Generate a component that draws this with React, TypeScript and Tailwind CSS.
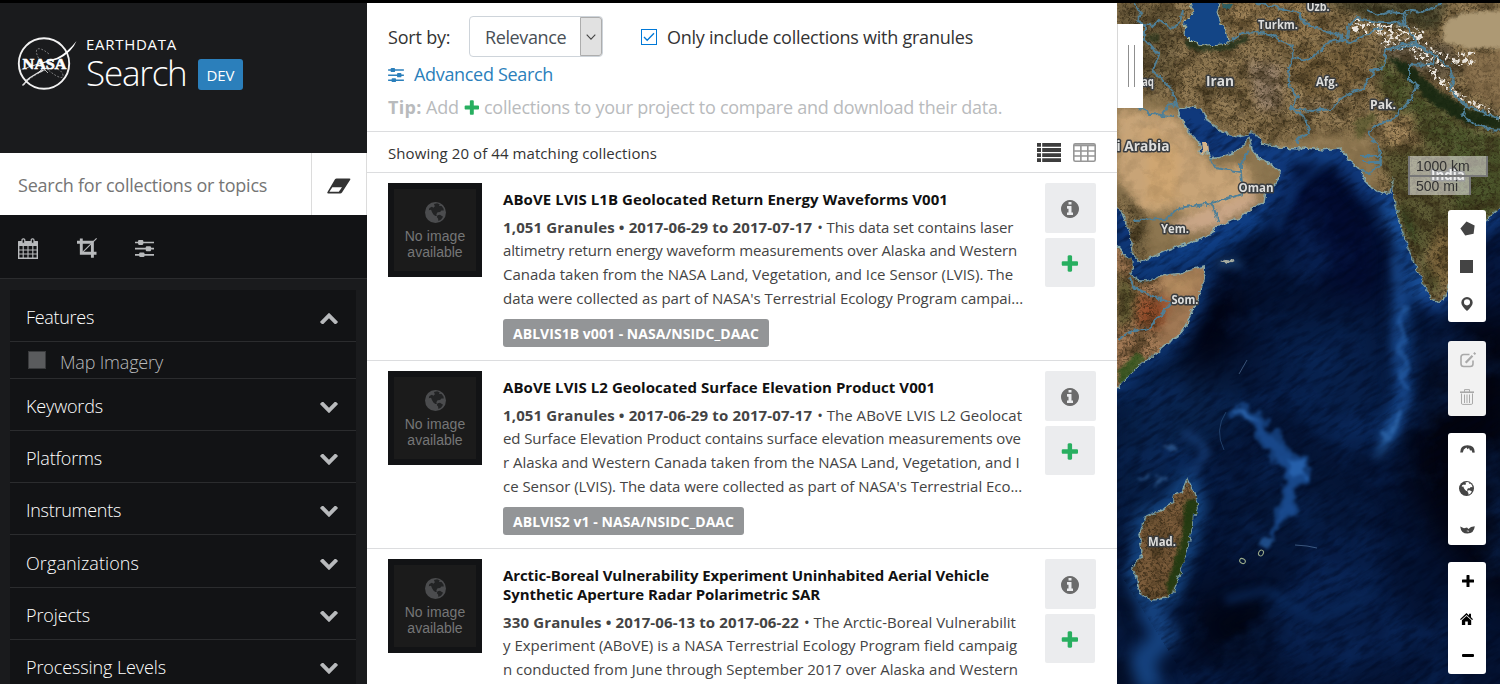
import type { ReactNode } from "react";

/* ---------- icons ---------- */

function Plus({ className }: { className: string }) {
  return (
    <svg viewBox="128 256 1472 1472" className={className} fill="currentColor">
      <path d="M1600 896v192q0 40-28 68t-68 28h-416v416q0 40-28 68t-68 28h-192q-40 0-68-28t-28-68v-416h-416q-40 0-68-28t-28-68v-192q0-40 28-68t68-28h416v-416q0-40 28-68t68-28h192q40 0 68 28t28 68v416h416q40 0 68 28t28 68z" />
    </svg>
  );
}

function Info({ className }: { className: string }) {
  return (
    <svg viewBox="128 128 1536 1536" className={className} fill="currentColor">
      <path d="M1152 1376v-160q0-14-9-23t-23-9h-96v-512q0-14-9-23t-23-9h-320q-14 0-23 9t-9 23v160q0 14 9 23t23 9h96v320h-96q-14 0-23 9t-9 23v160q0 14 9 23t23 9h448q14 0 23-9t9-23zm-128-896v-160q0-14-9-23t-23-9h-192q-14 0-23 9t-9 23v160q0 14 9 23t23 9h192q14 0 23-9t9-23zm640 416q0 209-103 385.5t-279.5 279.5-385.5 103-385.5-103-279.5-279.5-103-385.5 103-385.5 279.5-279.5 385.5-103 385.5 103 279.5 279.5 103 385.5z" />
    </svg>
  );
}

function Chevron({ up = false }: { up?: boolean }) {
  return (
    <svg viewBox="90 570 1612 1000" className={up ? "mt-px h-[11px] w-[18px] rotate-180" : "mt-[2px] h-[11px] w-[18px]"} fill="#b8babc">
      <path d="M1683 808l-742 741q-19 19-45 19t-45-19l-742-741q-19-19-19-45.500t19-45.500l166-165q19-19 45-19t45 19l531 531 531-531q19-19 45-19t45 19l166 165q19 19 19 45.500t-19 45.500z" />
    </svg>
  );
}

function Sliders({ className }: { className: string }) {
  return (
    <svg viewBox="0 0 18 16" className={className} fill="currentColor">
      <path d="M0 1.500h18v1.600H0zM0 7.400h18v1.600H0zM0 13.200h18v1.600H0z" />
      <rect x="2.900" y="0" width="5" height="4.600" rx="1" />
      <rect x="10.200" y="5.800" width="5" height="4.800" rx="1" />
      <rect x="4" y="11.700" width="5" height="4.300" rx="1" />
    </svg>
  );
}

function Calendar() {
  return (
    <svg viewBox="0 0 20 21" className="h-[21px] w-5" fill="none" stroke="#b8babc">
      <path d="M0.700 4h18.600v16.200H0.700z" strokeWidth="1.400" />
      <path d="M0.700 3.500h18.600v4H0.700z" fill="#b8babc" strokeWidth="1" />
      <path d="M5.200 7v13M10 7v13M14.800 7v13M1 12h18M1 16h18" strokeWidth="1.100" />
      <rect x="4" y="0.800" width="2.800" height="4.600" rx="1.200" fill="#121315" strokeWidth="1.200" />
      <rect x="13.200" y="0.800" width="2.800" height="4.600" rx="1.200" fill="#121315" strokeWidth="1.200" />
    </svg>
  );
}

function Crop() {
  return (
    <svg viewBox="0 0 20 20" className="size-5" fill="none" stroke="#b8babc">
      <path d="M4.300 0.500v14.700h15.200M0 4.300h15.400v15.400" strokeWidth="2.900" />
      <path d="M5 14.800L19.600 0.400" strokeWidth="1.100" />
    </svg>
  );
}

function Eraser() {
  return (
    <svg viewBox="0 0 24 16" className="h-4 w-6" fill="#333">
      <path d="M9.600 0.400h12.900q1.300 0 0.700 1.300L15 14.400q-0.700 1.100-1.800 1.100H1.300Q-0.300 15.400 0.500 14L8 1.300Q8.600 0.400 9.600 0.400z" />
      <path d="M5.300 9.200h9.700l-3.200 4.600H2.400z" fill="#fff" />
    </svg>
  );
}

function Globe({ className, land, sea }: { className: string; land: string; sea: string }) {
  return (
    <svg viewBox="0 0 20 20" className={className}>
      <circle cx="10" cy="10" r="10" fill={land} />
      <path
        fill={sea}
        d="M8.500 2L11.500 1.300 14 2.200 13.200 3.600 15.800 3.800 17.600 6.200 17.900 8.200 15.600 8 14.400 9.600 12 9.800 10.800 11.600 11.400 13 9.800 13.400 8 11.800 6.600 9.500 5.800 7.400 3.600 7.800 4.200 5.800 6.600 4.600 8 5.400 9.400 4Z"
      />
      <path fill={sea} d="M12 12.600L14.200 12.200 17.200 14 15.400 16.600 12.800 18.200 12.400 15.600 11.200 14.200Z" />
    </svg>
  );
}

function NasaLogo() {
  return (
    <svg viewBox="0 0 60 54" className="h-[54px] w-[60px]" fill="none" stroke="#f2f2f2">
      <circle cx="27" cy="26.500" r="25.200" strokeWidth="1.900" />
      <path d="M7 48C16 36 42 24 46 38c1 7-14-2-22-13-9-13-4-18 8-8" strokeWidth="0.600" strokeDasharray="2 1.500" opacity="0.750" />
      <path d="M5.500 48.500l7-7.500 8-5 6-3" strokeWidth="1.400" opacity="0.900" />
      <path d="M21 36l5-5 5 5M9 43l4-2" strokeWidth="1" opacity="0.700" />
      <text x="27.500" y="31.500" textAnchor="middle" textLength="44" lengthAdjust="spacingAndGlyphs" fontFamily="Liberation Serif, serif" fontWeight="700" fontSize="14.500" fill="#fff" stroke="#fff" strokeWidth="0.600">
        NASA
      </text>
      <path d="M0.500 34.500L12 29.500 40 20.800Q51 15 59.500 4Q55 15.500 41 22.300L14 29.500z" fill="#fff" stroke="none" />
    </svg>
  );
}

/* ---------- sidebar ---------- */

const facets: { label: string; cls: string; h: string }[] = [
  { label: "Keywords", cls: "tracking-[-0.16px]", h: "h-[52px]" },
  { label: "Platforms", cls: "tracking-[-0.16px]", h: "h-[52px]" },
  { label: "Instruments", cls: "tracking-[-0.27px]", h: "h-[52px]" },
  { label: "Organizations", cls: "tracking-[0.09px]", h: "h-[53px]" },
  { label: "Projects", cls: "tracking-[-0.13px]", h: "h-[52px]" },
  { label: "Processing Levels", cls: "tracking-[-0.1px]", h: "h-[52px]" },
];

function Sidebar() {
  return (
    <aside className="flex w-[367px] shrink-0 flex-col bg-[#1a1b1d]">
      <header className="flex h-[150px] shrink-0 items-start pt-[34px] pl-[17px]">
        <NasaLogo />
        <div className="ml-[9px] flex flex-col text-white">
          <span className="-mt-px h-[17px] text-[15px] leading-[17px] tracking-[0.72px]">EARTHDATA</span>
          <div className="mt-[5px] flex items-center">
            <span className="-mt-0.5 w-[112px] text-[35px] leading-[32px] font-light tracking-[-1.2px]">Search</span>
            <span className="mt-px flex h-[31px] w-[45px] items-center justify-center rounded-[3px] bg-[#2b7fbb] pt-0.5 text-[15px] tracking-[-0.06px]">DEV</span>
          </div>
        </div>
      </header>
      <div className="flex h-[62px] shrink-0 border-r border-[#dcdcdc] bg-white">
        <div className="flex w-[311px] items-center pt-[3px] pl-[18px] text-[18px] tracking-[-0.24px] text-[#757575]">Search for collections or topics</div>
        <div className="flex flex-1 items-center justify-center border-l border-[#dcdcdc] pt-[3px]">
          <Eraser />
        </div>
      </div>
      <div className="flex h-[64px] shrink-0 items-center border-b border-[#2b2c2e] bg-[#121315] pb-[5px] pl-[18px] text-[#b8babc]">
        <div className="flex items-center pt-[8px]">
          <Calendar />
          <div className="w-[39px]" />
          <Crop />
          <div className="w-[38px]" />
          <Sliders className="mt-px h-[17px] w-[19px]" />
        </div>
      </div>
      <div className="min-h-0 flex-1 overflow-hidden pt-[11px] pr-[11px] pl-2.5 text-[18px] font-light">
        <div className="bg-[#121315]">
          <div className="flex h-[52px] items-center justify-between border-b border-[#2b2c2e] pt-1 pr-[18px] pl-4 tracking-[-0.3px] text-white">
            Features
            <Chevron up />
          </div>
          <div className="flex h-[37px] items-center border-b border-[#2b2c2e] pl-[18px] tracking-[-0.18px] text-[#b8babc]">
            <span className="size-[18px] border border-[#3a3b3d] bg-[#5a5b5d]" />
            <span className="ml-[14px] pt-[4px]">Map Imagery</span>
          </div>
          {facets.map((f) => (
            <div key={f.label} className={`flex items-center justify-between border-b border-[#2b2c2e] pt-1 pr-[18px] pl-4 text-white ${f.h} ${f.cls}`}>
              {f.label}
              <Chevron />
            </div>
          ))}
        </div>
      </div>
    </aside>
  );
}

/* ---------- results ---------- */

type Line = [string, string];
type Result = { titles: Line[]; bold: Line; first: Line; lines: Line[]; tag?: Line };

const results: Result[] = [
  {
    titles: [["ABoVE LVIS L1B Geolocated Return Energy Waveforms V001", "tracking-[0.065px]"]],
    bold: ["1,051 Granules • 2017-06-29 to 2017-07-17", "tracking-[0.14px]"],
    first: ["• This data set contains laser", "tracking-[-0.08px]"],
    lines: [
      ["altimetry return energy waveform measurements over Alaska and Western", "tracking-[-0.125px]"],
      ["Canada taken from the NASA Land, Vegetation, and Ice Sensor (LVIS). The", "tracking-[0px]"],
      ["data were collected as part of NASA's Terrestrial Ecology Program campai...", "tracking-[-0.035px]"],
    ],
    tag: ["ABLVIS1B v001 - NASA/NSIDC_DAAC", "tracking-[0.04px]"],
  },
  {
    titles: [["ABoVE LVIS L2 Geolocated Surface Elevation Product V001", "tracking-[0.06px]"]],
    bold: ["1,051 Granules • 2017-06-29 to 2017-07-17", "tracking-[0.14px]"],
    first: ["• The ABoVE LVIS L2 Geolocat", "tracking-[0.03px]"],
    lines: [
      ["ed Surface Elevation Product contains surface elevation measurements ove", "tracking-[-0.1px]"],
      ["r Alaska and Western Canada taken from the NASA Land, Vegetation, and I", "tracking-[-0.03px]"],
      ["ce Sensor (LVIS). The data were collected as part of NASA's Terrestrial Eco...", "tracking-[-0.04px]"],
    ],
    tag: ["ABLVIS2 v1 - NASA/NSIDC_DAAC", "tracking-[0.06px]"],
  },
  {
    titles: [
      ["Arctic-Boreal Vulnerability Experiment Uninhabited Aerial Vehicle", "tracking-[-0.1px]"],
      ["Synthetic Aperture Radar Polarimetric SAR", "tracking-[-0.06px]"],
    ],
    bold: ["330 Granules • 2017-06-13 to 2017-06-22", "tracking-[0.14px]"],
    first: ["• The Arctic-Boreal Vulnerabilit", "tracking-[-0.02px]"],
    lines: [
      ["y Experiment (ABoVE) is a NASA Terrestrial Ecology Program field campaig", "tracking-[0.005px]"],
      ["n conducted from June through September 2017 over Alaska and Western", "tracking-[-0.015px]"],
    ],
  },
];

function ResultRow({ r }: { r: Result }) {
  return (
    <article className="flex h-[188px] shrink-0 border-b border-[#dcdddf] pt-2.5 pr-[21px] pl-[21px]">
      <div className="flex size-[94px] shrink-0 flex-col items-center border-[6px] border-[#121315] bg-[#1b1b1b] pt-[13px] font-['Liberation_Sans',sans-serif] text-[14px] leading-4 text-[#757677]">
        <Globe className="size-[21px]" land="#4b4c4e" sea="#222324" />
        <span className="mt-[5px] tracking-[0.1px]">No image</span>
        <span>available</span>
      </div>
      <div className="ml-[21px] w-[542px] shrink-0 text-[15px] whitespace-nowrap text-[#444]">
        <h3 className="pt-[7px] leading-[19px] font-bold text-[#111]">
          {r.titles.map(([t, c]) => (
            <div key={t} className={c}>
              {t}
            </div>
          ))}
        </h3>
        <div className="mt-[7px] flex h-[22px] gap-[5px] leading-[23.500px]">
          <b className={r.bold[1]}>{r.bold[0]}</b>
          <span className={r.first[1]}>{r.first[0]}</span>
        </div>
        {r.lines.map(([t, c]) => (
          <div key={t} className={`h-[24px] leading-[24px] ${c}`}>
            {t}
          </div>
        ))}
        {r.tag && (
          <div className="mt-[9px] flex">
            <span className={`flex h-7 items-center rounded-[3px] bg-[#939597] px-2.5 text-[14px] font-bold text-white ${r.tag[1]}`}>{r.tag[0]}</span>
          </div>
        )}
      </div>
      <div className="flex flex-col gap-[5px]">
        <button className="flex h-[50px] w-[51px] items-center justify-center rounded-[2px] bg-[#ebecee] pt-[2px] pr-px text-[#6b6b6b]">
          <Info className="size-[18px]" />
        </button>
        <button className="flex h-[49px] w-[50px] items-center justify-center rounded-[2px] bg-[#ebecee] pt-[2px] pr-px text-[#28af60]">
          <Plus className="size-[17px]" />
        </button>
      </div>
    </article>
  );
}

function Results() {
  return (
    <main className="flex w-[750px] shrink-0 flex-col overflow-hidden bg-white text-[18px] whitespace-nowrap text-[#333]">
      <div className="flex h-[129px] shrink-0 flex-col border-b border-[#dcdddf] pt-[13px] pl-[21px]">
        <div className="flex h-[41px] items-center">
          <span className="w-[81px] pt-0.5 tracking-[-0.2px]">Sort by:</span>
          <div className="flex h-[41px] w-[134px] items-stretch justify-between rounded-[4px] border border-[#ced4da]">
            <span className="flex items-center pt-0.5 pl-[15px] tracking-[-0.38px] text-[#495057]">Relevance</span>
            <span className="flex w-[22px] items-center justify-center rounded-r-[3px] border border-[#adadad] bg-[#e1e1e1]">
              <svg viewBox="0 0 10 6" className="h-1.5 w-2.5" fill="none" stroke="#444" strokeWidth="1.100">
                <path d="M0.700 0.700L5 5.100 9.300 0.700" />
              </svg>
            </span>
          </div>
          <span className="ml-[38px] flex size-4 items-center justify-center border border-[#0078d7]">
            <svg viewBox="0 0 12 10" className="h-2.5 w-3" fill="none" stroke="#0078d7" strokeWidth="1.300">
              <path d="M1 5l3.200 3.300L11 1.200" />
            </svg>
          </span>
          <span className="ml-[10px] pt-0.5 tracking-[-0.245px]">Only include collections with granules</span>
        </div>
        <div className="mt-[5px] flex h-[26px] items-center text-[#2b7fbb]">
          <Sliders className="h-[14px] w-4" />
          <span className="-mt-0.5 ml-[10px] tracking-[-0.323px]">Advanced Search</span>
        </div>
        <div className="mt-[6px] flex h-[26px] items-center text-[#b9bbbd]">
          <b className="w-[38px] tracking-[0.3px]">Tip:</b>
          <span className="w-[38px] tracking-[-0.14px]">Add</span>
          <Plus className="mt-px size-[15px] text-[#28af60]" />
          <span className="ml-[5px] tracking-[-0.25px]">collections to your project to compare and download their data.</span>
        </div>
      </div>
      <div className="flex h-[41px] shrink-0 items-center border-b border-[#dcdddf] pr-[21px] pl-[21px]">
        <span className="flex-1 pt-[2px] text-[15px] tracking-[0.08px]">Showing 20 of 44 matching collections</span>
        <svg viewBox="0 0 24 19" className="h-[19px] w-6" fill="#3d3d3d">
          <path d="M0 0h4v3.800H0zM5.200 0H24v3.800H5.200zM0 5.100h4v3.800H0zM5.200 5.100H24v3.800H5.200zM0 10.200h4V14H0zM5.200 10.200H24V14H5.200zM0 15.200h4V19H0zM5.200 15.200H24V19H5.200z" />
        </svg>
        <svg viewBox="0 0 23 19" className="ml-3 h-[19px] w-[23px]" fill="none" stroke="#979797">
          <rect x="0.800" y="0.800" width="21.400" height="17.400" rx="1.500" strokeWidth="1.600" />
          <path d="M1 2.300h21" strokeWidth="2" />
          <path d="M1 8h21M1 13h21M7.900 3v15M14.800 3v15" strokeWidth="1.600" />
        </svg>
      </div>
      {results.map((r) => (
        <ResultRow key={r.titles[0][0]} r={r} />
      ))}
    </main>
  );
}

/* ---------- map ---------- */

const ASIA =
  "M-5 -5H390V204L383 208 370 219 358 228 346 240 334 255 335 270 330 290 326 300 321 302 314 298 305 280 297 262 289 240 283 225 280 210 277 198 276 176 274 193 265 193 255 188 245 178 246 172 240 168 232 160 228 153 222 148 205 150 190 148 181 149 165 148 145 143 139 134 133 132 130 135 120 137 105 132 98 125 90 120 85 110 78 107 68 108 61 109 63 118 70 130 78 138 83 145 82 152 86 155 91 152 94 159 105 157 118 152 128 143 132 137 135 150 142 158 152 163 160 169 164 174 158 184 148 192 146 203 135 208 122 218 110 222 98 228 96 232 80 240 62 246 45 253 33 258 22 261 16 255 14 245 14 235 10 225 5 213 -5 203Z";
const AFRICA =
  "M-5 244L2 248 8 256 15 262 17 268 13 275 22 281 30 281 50 275 65 273 80 268 87 266 88 280 84 284 82 298 72 318 66 330 60 338 51 343 38 354 25 363 10 377 2 386 -5 395Z";
const MADAGASCAR =
  "M70 479L77 493 81 508 79 515 76 512 75 525 72 545 62 575 56 592 50 598 35 600 22 593 20 580 16 568 24 558 25 550 22 535 28 517 45 510 56 503 58 494 65 492Z";

const BORDERS = [
  "M112 43L125 33 142 32 155 36 172 44 177 50 176 58 190 60 205 50 212 42 222 40 233 43 244 37 258 30 266 28",
  "M176 58L171 70 172 85 180 97 174 108 188 118 193 133 181 138 181 144",
  "M174 108L195 111 215 109 222 100 235 92 245 90 250 80 258 74 254 70 263 70 268 62 268 50 285 44 300 43 305 47",
  "M134 2L160 7 182 13 188 24 210 32 224 35 226 43",
  "M230 40L232 24 240 18 250 20 262 22 272 22 285 24 288 10 305 12 325 4",
  "M250 10L262 16 272 12 290 14 287 24 297 38 300 43",
  "M300 85L295 98 275 120 255 127 252 135 262 148 264 165 252 173 243 171",
  "M268 50L300 45 318 55 316 64 292 65 292 80 300 85",
  "M300 44L318 55 333 67 337 82 333 90 348 105 383 119",
  "M348 108L345 116 360 125 372 129 388 130",
  "M17 2L24 12 20 20 28 25 28 40 42 55 36 70 48 82 55 90 61 108",
  "M20 22L36 26 44 20 55 28 63 22 66 10",
  "M0 97L22 108 35 114 45 115 50 106 60 104M45 115L58 116",
  "M93 158L98 168 124 172 124 164 132 150",
  "M16 220L50 219 62 208 95 203 126 194 124 172",
  "M95 203L102 222",
  "M13 278L18 288 30 294 54 303 32 328 14 331 0 340",
  "M243 156L262 156 264 162 245 162",
];

const LABELS: [string, number, number, number, number][] = [
  ["Uzb.", 201, 11, 11.5, 23],
  ["Turkm.", 161, 28.5, 12.5, 40],
  ["Iran", 103, 86, 13.5, 28],
  ["Afg.", 210, 85.500, 12.5, 22],
  ["Pak.", 266, 109, 12.5, 26],
  ["Oman", 139, 192, 12.5, 35],
  ["Yem.", 58, 233, 12.5, 28],
  ["Som.", 68, 304, 12.5, 27],
  ["Mad.", 45, 546, 12.5, 28],
  ["India", 331, 180, 14, 34],
];

function MapImagery() {
  return (
    <svg viewBox="0 3 383 681" className="absolute inset-0 h-full w-full" preserveAspectRatio="none" colorInterpolationFilters="sRGB">
      <defs>
        <filter id="coast" x="-5%" y="-5%" width="110%" height="110%">
          <feTurbulence type="fractalNoise" baseFrequency="0.16" numOctaves="3" seed="4" />
          <feDisplacementMap in="SourceGraphic" scale="6" xChannelSelector="R" yChannelSelector="G" />
        </filter>
        <filter id="b2" x="-50%" y="-50%" width="200%" height="200%"><feGaussianBlur stdDeviation="1.6" /></filter>
        <filter id="b4" x="-50%" y="-50%" width="200%" height="200%"><feGaussianBlur stdDeviation="4" /></filter>
        <filter id="b7" x="-50%" y="-50%" width="200%" height="200%"><feGaussianBlur stdDeviation="7" /></filter>
        <filter id="b18" x="-80%" y="-80%" width="260%" height="260%"><feGaussianBlur stdDeviation="16" /></filter>
        <filter id="ragged" x="-30%" y="-30%" width="160%" height="160%">
          <feTurbulence type="fractalNoise" baseFrequency="0.07" numOctaves="4" seed="9" result="n" />
          <feDisplacementMap in="SourceGraphic" in2="n" scale="20" xChannelSelector="R" yChannelSelector="G" />
          <feGaussianBlur stdDeviation="1.6" />
        </filter>
        <filter id="terrain" x="0" y="0" width="100%" height="100%">
          <feTurbulence type="fractalNoise" baseFrequency="0.06 0.07" numOctaves="6" seed="12" />
          <feColorMatrix values="0 0 0 0 0.2  0 0 0 0 0.16  0 0 0 0 0.08  2.2 1.6 0 0 -1.65" result="m" />
          <feGaussianBlur in="SourceAlpha" stdDeviation="5" result="a" />
          <feComposite in="m" in2="a" operator="in" />
        </filter>
        <filter id="fine" x="0" y="0" width="100%" height="100%">
          <feTurbulence type="fractalNoise" baseFrequency="0.35 0.4" numOctaves="3" seed="18" />
          <feColorMatrix values="0 0 0 0 0.14  0 0 0 0 0.11  0 0 0 0 0.05  3.4 1.6 0 0 -2.3" result="m" />
          <feGaussianBlur in="SourceAlpha" stdDeviation="5" result="a" />
          <feComposite in="m" in2="a" operator="in" />
        </filter>
        <filter id="highlight" x="0" y="0" width="100%" height="100%">
          <feTurbulence type="fractalNoise" baseFrequency="0.07 0.1" numOctaves="5" seed="31" />
          <feColorMatrix values="0 0 0 0 0.78  0 0 0 0 0.68  0 0 0 0 0.53  0 3 1 0 -1.9" />
        </filter>
        <filter id="snow" x="-10%" y="-60%" width="120%" height="220%">
          <feTurbulence type="fractalNoise" baseFrequency="0.25" numOctaves="3" seed="7" result="n" />
          <feColorMatrix in="n" values="0 0 0 0 0.92  0 0 0 0 0.9  0 0 0 0 0.87  8 4 0 0 -6.1" result="m" />
          <feComposite in="m" in2="SourceGraphic" operator="in" />
        </filter>
        <filter id="seabed" x="0" y="0" width="100%" height="100%">
          <feTurbulence type="fractalNoise" baseFrequency="0.014 0.018" numOctaves="6" seed="22" />
          <feColorMatrix values="0 0 0 0 0.05  0 0 0 0 0.19  0 0 0 0 0.42  2.6 0 0 0 -1.2" />
        </filter>
        <filter id="grain" x="0" y="0" width="100%" height="100%">
          <feTurbulence type="fractalNoise" baseFrequency="0.05 0.2" numOctaves="4" seed="5" />
          <feColorMatrix values="0 0 0 0 0  0 0 0 0 0.02  0 0 0 0 0.1  3 0 0 0 -1.3" />
        </filter>
        <clipPath id="land">
          <path d={ASIA} />
          <path d={AFRICA} />
          <path d={MADAGASCAR} />
        </clipPath>
      </defs>

      <rect x="0" y="0" width="383" height="684" fill="#041231" />
      <g filter="url(#b18)">
        <path d="M0 395L60 350 110 330 130 420 60 480 0 560Z" fill="#082149" />
        <path d="M85 280L125 280 125 330 90 390 65 350Z" fill="#010312" />
        <path d="M150 170L225 160 265 230 265 300 230 300 160 230Z" fill="#020b30" />
        <path d="M160 320L260 310 280 420 230 460 190 430 140 370Z" fill="#071f49" />
        <path d="M320 340L400 310V620L320 540 290 470 295 420Z" fill="#02030e" />
        <path d="M150 460L220 470 260 520 200 560 130 560 90 500Z" fill="#051739" />
        <path d="M70 600L190 590 230 640 90 660Z" fill="#010513" />
        <path d="M0 590L14 600 10 690 -10 690Z" fill="#020818" />
        <path d="M190 540L220 520 270 580 310 650 200 690 150 650Z" fill="#071d47" />
        <path d="M350 240L400 220V310L340 300Z" fill="#06163c" />
      </g>
      <rect x="0" y="0" width="383" height="684" filter="url(#seabed)" opacity="0.5" />
      <g fill="none" strokeLinejoin="round" filter="url(#b7)">
        <path d={ASIA} stroke="#10397c" strokeWidth="26" />
        <path d={AFRICA} stroke="#0d3470" strokeWidth="18" />
        <path d={MADAGASCAR} stroke="#164a8a" strokeWidth="16" />
        <path d="M270 200Q286 245 308 298" stroke="#1b55a2" strokeWidth="16" />
        <path d="M28 604L50 635 25 660 35 690" stroke="#15427f" strokeWidth="24" />
        <path d="M20 262L100 245 150 212" stroke="#0f3f86" strokeWidth="20" />
        <path d="M288 250L284 320 287 390 270 440" stroke="#103a78" strokeWidth="20" />
      </g>
      <rect x="-60" y="100" width="520" height="700" filter="url(#grain)" opacity="0.4" transform="rotate(-32 190 400)" />
      <g filter="url(#b4)" opacity="0.75">
        <path d="M278 255L284 300 280 350 288 400 272 440" stroke="#1d5098" strokeWidth="7" fill="none" />
        <path d="M270 425L282 408 280 430 266 455 256 460Z" fill="#2560a8" />
        <path d="M135 150L190 158 218 155 180 185 165 215 160 230" stroke="#14458c" strokeWidth="5" fill="none" />
        <path d="M100 260h24v6h-24z" fill="#2f66a5" />
        <path d="M65 432L80 440 90 452 74 475" stroke="#1c4888" strokeWidth="6" fill="none" />
        <path d="M108 600L150 590 200 620 260 590" stroke="#0b2c60" strokeWidth="8" fill="none" />
      </g>
      <g filter="url(#ragged)">
        <path d="M112 414L126 405 142 414 158 437 175 454 192 460 189 474 178 490 180 508 166 526 158 533 155 522 163 508 166 495 170 480 160 462 145 444 133 424Z" fill="#1f56a0" stroke="#174585" strokeWidth="4" opacity="0.8" />
        <path d="M116 410L128 407 142 422 126 420Z" fill="#3570b8" opacity="0.6" />
        <path d="M172 460L190 462 184 476 176 474Z" fill="#2f6fc0" opacity="0.6" />
        <path d="M275 420L284 405 282 425 270 442Z" fill="#3672b8" opacity="0.55" />
        <path d="M140 545L150 535 158 538 150 552Z" fill="#2a62a8" opacity="0.7" />
        <path d="M284 305L287 385" stroke="#2a66b0" strokeWidth="6" opacity="0.5" />
        <path d="M20 478l10-2M38 482l12-2M46 446l8 4" stroke="#3b6ba5" strokeWidth="4" opacity="0.6" />
      </g>
      <path d="M109 412Q97 430 107 450" stroke="#3b6596" strokeWidth="1" fill="none" opacity="0.5" />
      <path d="M178 545L190 546 200 548M122 374L130 360" stroke="#7fa5cf" strokeWidth="1" fill="none" opacity="0.45" />

      <g filter="url(#coast)">
        <g stroke="#8aa9a8" strokeWidth="1.600">
          <path d={ASIA} fill="#8d7650" />
          <path d={AFRICA} fill="#a07854" />
          <path d={MADAGASCAR} fill="#7b5c3b" />
        </g>
        <g clipPath="url(#land)">
          <g filter="url(#b4)">
            <path d="M0 108L60 115 82 150 95 165 130 165 140 205 100 220 62 210 25 212 0 190Z" fill="#c8a477" />
            <path d="M30 125L62 150 60 200 30 205Z" fill="#cfa672" />
            <path d="M100 205L145 190 140 205 100 228 60 235 55 222Z" fill="#c9a687" />
            <path d="M0 190L12 205 16 250 25 258 30 225 20 205 0 180Z" fill="#675839" />
            <path d="M60 10L0 0V60L45 95 62 60Z" fill="#6e5e3e" />
            <path d="M110 -5H200L210 30 170 42 130 28 112 30Z" fill="#957a50" />
            <path d="M130 60L165 65 165 110 140 110Z" fill="#937e68" />
            <path d="M176 100L230 98 210 112 185 110Z" fill="#a68d6a" />
            <path d="M184 44L250 44 250 80 190 98 175 70Z" fill="#7f6842" />
            <path d="M205 0H330L320 30 260 22Z" fill="#3e3e27" />
            <path d="M262 40L330 42 350 70 320 80 268 60Z" fill="#655843" />
            <path d="M262 60L275 62 300 90 350 125 390 135V205L358 228 335 250 330 170 300 130 275 110 262 85Z" fill="#4c562c" />
            <path d="M268 112L300 115 290 150 268 158Z" fill="#a08459" />
            <path d="M262 150L330 145 340 220 300 260 285 210Z" fill="#5c5a34" />
            <path d="M277 200L290 235 318 296 322 290 300 250 292 215Z" fill="#25401c" />
            <path d="M320 225L340 230 332 285 320 290 310 260Z" fill="#7d673e" />
            <path d="M20 295L55 300 42 330 20 325Z" fill="#98502e" />
            <path d="M0 270L20 290 15 320 0 330Z" fill="#5e5a32" />
            <path d="M40 280L85 270 80 290 55 300Z" fill="#b48c60" />
          </g>
          <rect x="0" y="0" width="383" height="150" filter="url(#highlight)" opacity="0.2" />
          <path d="M0 0H383V140H300L200 130 140 148 90 118 58 100 0 88ZM262 110L383 110V310H262ZM0 195L26 215 26 262 0 262ZM0 262H40V400H0ZM0 480H90V610H0Z" filter="url(#terrain)" opacity="0.6" />
          <path d="M0 0H383V140H300L200 130 140 148 90 118 58 100 0 88ZM262 110L383 110V310H262ZM0 195L26 215 26 262 0 262ZM0 262H40V400H0ZM0 480H90V610H0Z" filter="url(#fine)" opacity="0.55" />
          <rect x="0" y="80" width="383" height="320" filter="url(#terrain)" opacity="0.12" />
          <g filter="url(#b2)">
            <path d="M328 22L345 13 390 10V48L350 48 326 42Z" fill="#ad9974" />
            <path d="M340 54L390 52V108L352 92Z" fill="#856b4a" opacity="0.5" />
            <path d="M68 42L84 48 112 47 130 37" fill="none" stroke="#1f301a" strokeWidth="6" opacity="0.85" />
            <path d="M270 56L292 64 320 90 350 108 388 118V131L350 124 318 106 290 80Z" fill="#14260f" opacity="0.9" />
            <path d="M236 122L255 112 262 116 248 132 240 142Z" fill="#54552c" opacity="0.7" />
            <path d="M81 500L82 515 74 545 64 575 52 598 50 585 58 560 66 530 68 500Z" fill="#1f3a10" opacity="0.9" />
            <path d="M0 372L20 352 28 358 5 388Z" fill="#2c541b" opacity="0.8" />
            <path d="M30 36L42 40" stroke="#26331a" strokeWidth="7" opacity="0.7" />
          </g>
          <g filter="url(#snow)" fill="none" stroke="#fff" strokeLinecap="round">
            <path d="M270 44L296 42 320 60 352 58M240 26L300 34" strokeWidth="13" />
            <path d="M296 50L318 74 345 98 383 118" strokeWidth="7" />
          </g>
        </g>
        <path d="M72 -3L76 14 68 22 67 34 75 42 90 46 105 45 111 43 110 32 104 24 100 12 106 -3Z" fill="#134586" stroke="#9fb3a0" strokeWidth="1" />
        <path d="M105 3l12 1-3 6-8-1z" fill="#2b5f63" />
        <path d="M104 261L112 259 118 262 110 264Z" fill="#a5aba0" />
        <path d="M84 142L90 142 91 151 86 155Z" fill="#d6b48a" />
      </g>

      <g filter="url(#coast)" fill="none" stroke="#4f7f97" strokeWidth="1.900" strokeLinejoin="round">
        {BORDERS.map((d) => (
          <path key={d} d={d} />
        ))}
      </g>
      <g fill="none" stroke="#9bab8a" strokeWidth="1">
        <ellipse cx="125.500" cy="561" rx="3" ry="2.300" transform="rotate(30 125.500 561)" />
        <ellipse cx="144" cy="553" rx="2.300" ry="3" transform="rotate(30 144 553)" />
      </g>

      <g fontFamily="Open Sans, Noto Sans, sans-serif" fontWeight="700" textAnchor="middle" fill="#dededc" stroke="#3a3d40" strokeWidth="3.200" strokeLinejoin="round" paintOrder="stroke">
        {LABELS.map(([t, x, y, s, w]) => (
          <text key={t} x={x} y={y} fontSize={s} textLength={w} lengthAdjust="spacingAndGlyphs">
            {t}
          </text>
        ))}
        <text x="26" y="151" fontSize="14" textLength="53" lengthAdjust="spacingAndGlyphs">i Arabia</text>
        <text x="31" y="86" fontSize="13" textLength="12" lengthAdjust="spacingAndGlyphs">aq</text>
      </g>
    </svg>
  );
}

function Tools({ children, className }: { children: ReactNode; className: string }) {
  return <div className={`flex w-[38px] flex-col rounded-[3px] *:flex *:flex-1 *:items-center *:justify-center ${className}`}>{children}</div>;
}

function MapPane() {
  return (
    <section className="relative flex-1 overflow-hidden">
      <MapImagery />
      <div className="absolute top-[21px] left-0 flex h-[84px] w-[26px] items-center gap-[5px] border-l border-[#d8d8d8] bg-white pl-2.5">
        <span className="h-[42px] w-px bg-[#8f8f8f]" />
        <span className="h-[42px] w-px bg-[#8f8f8f]" />
      </div>
      <div className="absolute top-[153px] left-[291px] font-['Liberation_Sans',sans-serif] text-[14px] whitespace-nowrap text-[#333]">
        <div className="flex h-[21px] w-[80px] items-center border-2 border-t-0 border-[#777] bg-white/50 pt-0.5 pl-[6px]">1000 km</div>
        <div className="-mt-0.5 flex h-[20px] w-[63px] items-center border-2 border-b-0 border-[#777] bg-white/50 pl-[6px]">500 mi</div>
      </div>
      <div className="absolute top-[207px] left-[331px] flex flex-col">
        <Tools className="h-[112px] bg-white">
          <span>
            <svg viewBox="0 0 15 15" className="size-[15px]" fill="#444"><path d="M6.500 0.500L14.600 4.500 13.600 12.800 5.200 14.500 0.400 7.400Z" /></svg>
          </span>
          <span>
            <svg viewBox="0 0 13 13" className="mt-px mr-px size-[13px]" fill="#444"><path d="M0 0h13v13H0z" /></svg>
          </span>
          <span>
            <svg viewBox="0 0 12 14" className="mt-px mr-px h-[14px] w-3" fill="#444">
              <path fillRule="evenodd" d="M6 0a5.700 5.700 0 0 1 5.700 5.700C11.700 8.400 9 11.200 6 14 3 11.200 0.300 8.400 0.300 5.700A5.700 5.700 0 0 1 6 0zM6 2.300a3 3 0 1 0 0 6.100a3 3 0 1 0 0-6.100z" />
            </svg>
          </span>
        </Tools>
        <Tools className="mt-[19px] h-[75px] bg-[#f2f2f2]">
          <span>
            <svg viewBox="0 0 16 16" className="ml-[2px] size-4" fill="none" stroke="#a9a9a9" strokeWidth="1.600">
              <path d="M9.500 2.500H3.800Q1 2.500 1 5.300v6.400q0 2.800 2.800 2.800h6.400q2.800 0 2.800-2.800V8.500" />
              <path d="M5.700 10.700L12.500 3.700M14 2.200L15.300 0.900" strokeWidth="2.300" />
            </svg>
          </span>
          <span>
            <svg viewBox="0 0 14 16" className="h-4 w-3.5" fill="none" stroke="#a9a9a9" strokeWidth="1">
              <path d="M0 3.200h14" strokeWidth="1.600" />
              <path d="M4.500 2.800V0.600h5v2.200M1.500 4.500v9.500q0 1.400 1 1.400h9q1 0 1-1.400V4.500M4.500 5.500v8.500M7 5.500v8.500M9.500 5.500v8.500" />
            </svg>
          </span>
        </Tools>
        <Tools className="mt-[17px] h-[112px] bg-white">
          <span>
            <svg viewBox="0 0 15 8" className="mt-[-5px] h-2 w-[15px]" fill="#444">
              <path d="M0.200 7.400Q0.200 0.200 7.500 0.200T14.800 7.400L12.500 7.800 11.500 5.200 10 5.600 9 3 7.600 4.300 6.400 2.600 3.800 4.400 2.800 7.400Z" />
            </svg>
          </span>
          <span>
            <Globe className="mr-px size-[15px]" land="#444" sea="#fff" />
          </span>
          <span>
            <svg viewBox="0 0 15 8" className="mt-[7px] h-2 w-[15px]" fill="#444">
              <path d="M0.200 0.400L4 2.300 7 1.600 8.500 3 11 1 14.800 0.300Q14 7.600 7.500 7.600T0.200 0.400Z" />
              <path d="M6.200 5l2-0.600 1 1.400z" fill="#fff" />
            </svg>
          </span>
        </Tools>
        <Tools className="mt-[17px] h-[112px] bg-white text-black">
          <span>
            <svg viewBox="0 0 12 12" className="ml-[2px] size-3" fill="currentColor"><path d="M4.500 0.500Q4.500 0 5 0h2Q7.500 0 7.500 0.500V4.500H11.500Q12 4.500 12 5V7Q12 7.500 11.500 7.500H7.500V11.500Q7.500 12 7 12H5Q4.500 12 4.500 11.500V7.500H0.500Q0 7.500 0 7V5Q0 4.500 0.500 4.500H4.500Z" /></svg>
          </span>
          <span>
            <svg viewBox="0 0 13 12" className="mt-[2px] mr-px h-3 w-[13px]" fill="currentColor">
              <path d="M6.500 0L9 2.400V0.700H11V4.200L13 6.200 12.100 7.100 6.500 1.900 0.900 7.100 0 6.200Z" />
              <path d="M6.500 2.900L11.200 7.300V12H7.800V8.500H5.200V12H1.900V7.300Z" />
            </svg>
          </span>
          <span>
            <span className="mt-px ml-[2px] h-[3px] w-3 rounded-[1px] bg-black" />
          </span>
        </Tools>
      </div>
    </section>
  );
}

export default function App() {
  return (
    <div className="flex h-[684px] w-[1500px] flex-col overflow-hidden bg-[#1a1b1d] font-['Open_Sans','Noto_Sans',sans-serif]">
      <div className="h-[3px] shrink-0 bg-black" />
      <div className="flex min-h-0 flex-1">
        <Sidebar />
        <Results />
        <MapPane />
      </div>
    </div>
  );
}
